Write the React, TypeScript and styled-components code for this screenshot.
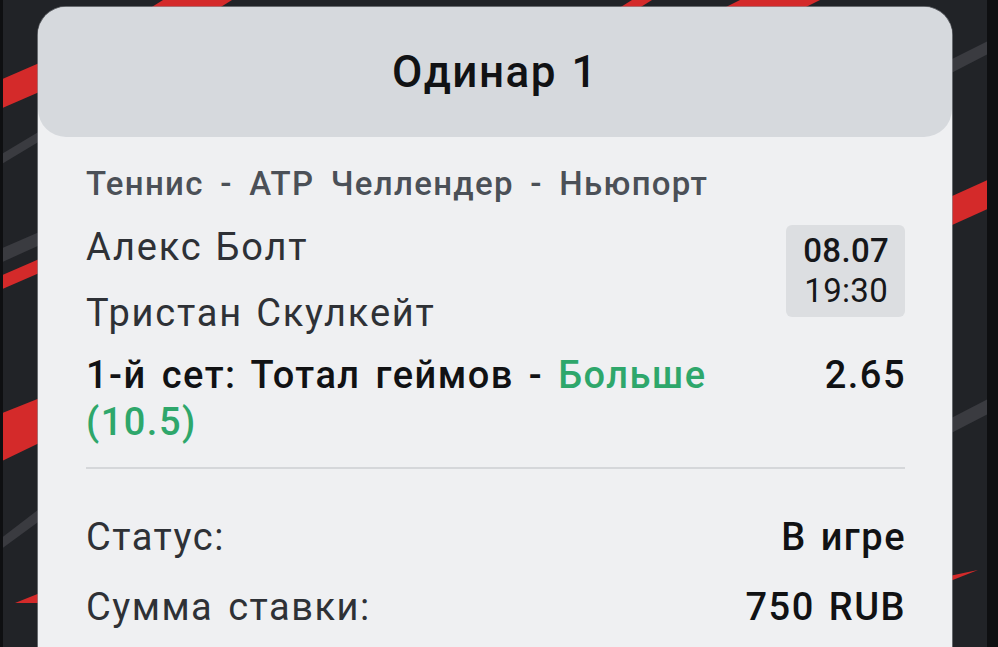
import React from 'react'
import styled, { createGlobalStyle } from 'styled-components'

const GlobalStyle = createGlobalStyle`
  html, body { margin: 0; padding: 0; height: 100%; }
  body {
    font-family: Roboto, 'Noto Sans', 'Liberation Sans', sans-serif;
    background: #0e0f11;
    overflow: hidden;
  }
`

/* ─── Layout ─────────────────────────────────────────── */

const Root = styled.div`
  display: flex;
  height: 100vh;
  background: #0e0f11;
`

const Edge = styled.div<{ $w: number }>`
  width: ${p => p.$w}px;
  flex-shrink: 0;
  background: #0e0f11;
`

const Stage = styled.div`
  flex: 1;
  position: relative;
  overflow: hidden;
  background: #212327;
  display: flex;
  padding: 7px 35px 0;
`

const Stripes = styled.svg`
  position: absolute;
  inset: 0;
  width: 100%;
  height: 100%;
`

const Card = styled.div`
  position: relative;
  z-index: 1;
  flex: 1;
  display: flex;
  flex-direction: column;
  background: #eff0f2;
  border-radius: 28px 28px 0 0;
  box-shadow: 0 0 0 1px rgba(150, 153, 158, 0.6);
`

const Header = styled.div`
  height: 130px;
  flex-shrink: 0;
  display: flex;
  align-items: center;
  justify-content: center;
  background: #d6d9dd;
  border-radius: 28px;
`

const Title = styled.h1`
  margin: 0;
  font-size: 44px;
  font-weight: 500;
  color: #111214;
  letter-spacing: 1.5px;
  word-spacing: 2px;
`

const Body = styled.div`
  padding: 27px 47px 0 48px;
  display: flex;
  flex-direction: column;
`

const League = styled.div`
  font-size: 33px;
  line-height: 40px;
  font-weight: 500;
  color: #4b5057;
  letter-spacing: 1.3px;
  word-spacing: 7px;
`

const MatchRow = styled.div`
  display: flex;
  justify-content: space-between;
  align-items: flex-start;
  margin-top: 10px;
`

const Teams = styled.div`
  display: flex;
  flex-direction: column;
`

const Team = styled.div`
  font-size: 38px;
  line-height: 66px;
  color: #2e3136;
  letter-spacing: 1.8px;
  word-spacing: 2px;
`

const DateBox = styled.div`
  margin-top: 11px;
  padding: 6px 16px 6px 17px;
  border-radius: 6px;
  background: #dcdee1;
  display: flex;
  flex-direction: column;
  align-items: center;
  color: #16171a;
`

const DateLine = styled.span<{ $strong?: boolean }>`
  font-size: 33px;
  line-height: 40px;
  letter-spacing: 0.3px;
  font-weight: ${p => (p.$strong ? 500 : 400)};
`

const BetRow = styled.div`
  display: flex;
  justify-content: space-between;
  align-items: flex-start;
  margin-top: 6px;
`

const Market = styled.div`
  max-width: 660px;
  font-size: 38px;
  line-height: 47px;
  font-weight: 500;
  color: #111214;
  letter-spacing: 1.5px;
  word-spacing: 4px;
`

const Pick = styled.span`
  color: #2ea76b;
`

const Odds = styled.div`
  font-size: 38px;
  line-height: 47px;
  font-weight: 500;
  color: #111214;
  letter-spacing: 1.5px;
  margin-right: -1px;
`

const Divider = styled.div`
  height: 2px;
  margin-top: 21px;
  background: #d5d7da;
`

const InfoList = styled.div`
  margin-top: 33px;
  display: flex;
  flex-direction: column;
`

const InfoRow = styled.div`
  display: flex;
  justify-content: space-between;
  align-items: baseline;
  line-height: 70px;
`

const InfoLabel = styled.span`
  font-size: 38px;
  color: #2e3136;
  letter-spacing: 1.5px;
  word-spacing: 4px;
`

const InfoValue = styled.span`
  font-size: 38px;
  font-weight: 500;
  color: #111214;
  letter-spacing: 1.5px;
  word-spacing: 3px;
  margin-right: -1px;
`

/* ─── Data ───────────────────────────────────────────── */

const RED = '#d42a2a'
const GREY = '#3a3b40'

// background bands, in page coordinates
const bands: { pts: string; fill: string }[] = [
  { pts: '163,0 232,0 216,10 147,10', fill: RED },
  { pts: '632,0 652,0 636,10 616,10', fill: RED },
  { pts: '740,0 820,0 800,10 720,10', fill: RED },
  { pts: '0,80 60,54 60,83 0,109', fill: RED },
  { pts: '0,155 60,119 60,129 0,165', fill: GREY },
  { pts: '0,249 60,223 60,236 0,263', fill: GREY },
  { pts: '0,276 60,250 60,264 0,290', fill: RED },
  { pts: '0,414 60,390 60,433 0,462', fill: RED },
  { pts: '0,539 60,493 60,506 0,550', fill: GREY },
  { pts: '15,603 60,585 60,603', fill: RED },
  { pts: '930,70 990,40 990,53 930,84', fill: GREY },
  { pts: '930,206 990,179 990,208 930,235', fill: RED },
  { pts: '930,429 990,398 990,413 930,444', fill: GREY },
  { pts: '930,580 978,570 930,589', fill: RED },
]

const infos = [
  { label: 'Статус:', value: 'В игре' },
  { label: 'Сумма ставки:', value: '750 RUB' },
]

/* ─── Component ──────────────────────────────────────── */

export default function App() {
  return (
    <>
      <GlobalStyle />
      <Root>
        <Edge $w={3} />
        <Stage>
          <Stripes viewBox="3 0 984 647" preserveAspectRatio="xMinYMin slice">
            {bands.map((b, i) => (
              <polygon key={i} points={b.pts} fill={b.fill} />
            ))}
          </Stripes>

          <Card>
            <Header>
              <Title>Одинар 1</Title>
            </Header>

            <Body>
              <League>Теннис - АТР Челлендер - Ньюпорт</League>

              <MatchRow>
                <Teams>
                  <Team>Алекс Болт</Team>
                  <Team>Тристан Скулкейт</Team>
                </Teams>
                <DateBox>
                  <DateLine $strong>08.07</DateLine>
                  <DateLine>19:30</DateLine>
                </DateBox>
              </MatchRow>

              <BetRow>
                <Market>
                  1-й сет: Тотал геймов - <Pick>Больше</Pick> <Pick>(10.5)</Pick>
                </Market>
                <Odds>2.65</Odds>
              </BetRow>

              <Divider />

              <InfoList>
                {infos.map(r => (
                  <InfoRow key={r.label}>
                    <InfoLabel>{r.label}</InfoLabel>
                    <InfoValue>{r.value}</InfoValue>
                  </InfoRow>
                ))}
              </InfoList>
            </Body>
          </Card>
        </Stage>
        <Edge $w={11} />
      </Root>
    </>
  )
}
